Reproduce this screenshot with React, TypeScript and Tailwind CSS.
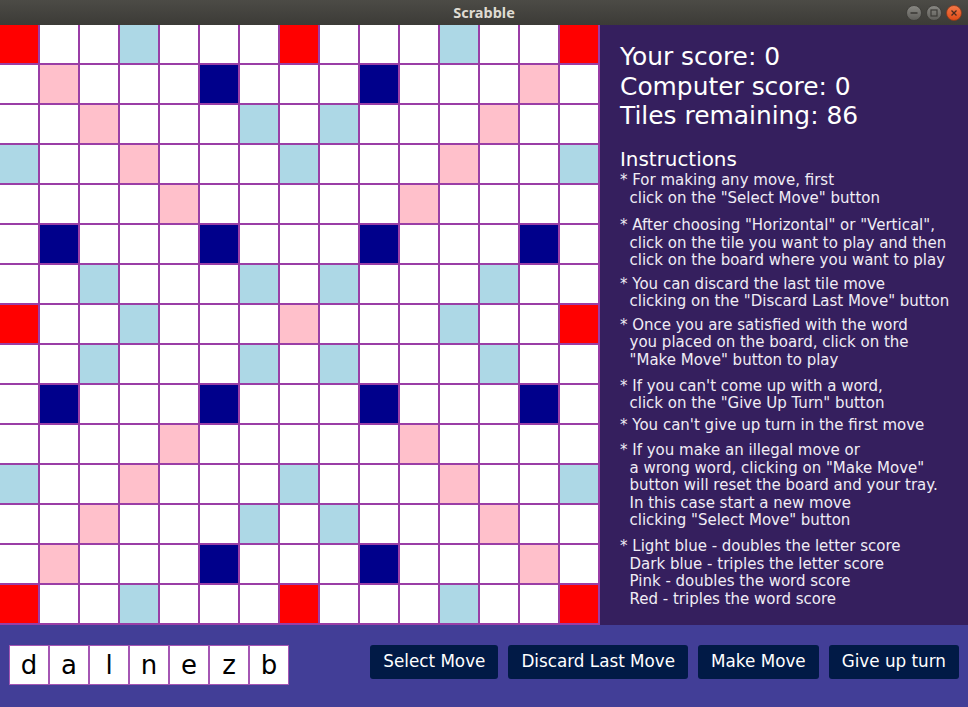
import React from "react";

type Kind = "N" | "TW" | "DW" | "TL" | "DL";

const TW: [number, number][] = [[0,0],[0,7],[0,14],[7,0],[7,14],[14,0],[14,7],[14,14]];
const DW: [number, number][] = [[1,1],[2,2],[3,3],[4,4],[1,13],[2,12],[3,11],[4,10],[13,1],[12,2],[11,3],[10,4],[13,13],[12,12],[11,11],[10,10],[7,7]];
const TL: [number, number][] = [[1,5],[1,9],[5,1],[5,5],[5,9],[5,13],[9,1],[9,5],[9,9],[9,13],[13,5],[13,9]];
const DL: [number, number][] = [[0,3],[0,11],[2,6],[2,8],[3,0],[3,7],[3,14],[6,2],[6,6],[6,8],[6,12],[7,3],[7,11],[8,2],[8,6],[8,8],[8,12],[11,0],[11,7],[11,14],[12,6],[12,8],[14,3],[14,11]];

function kindOf(r: number, c: number): Kind {
  const has = (l: [number, number][]) => l.some(([a, b]) => a === r && b === c);
  if (has(TW)) return "TW";
  if (has(DW)) return "DW";
  if (has(TL)) return "TL";
  if (has(DL)) return "DL";
  return "N";
}

const cellClass: Record<Kind, string> = {
  N: "bg-white",
  TW: "bg-[#ff0000]",
  DW: "bg-[#ffc0cb]",
  TL: "bg-[#00008b]",
  DL: "bg-[#add8e6]",
};

const paragraphs: { text: string; mt: string }[] = [
  { text: '* For making any move, first\n  click on the "Select Move" button', mt: "mt-[1.5px]" },
  { text: '* After choosing "Horizontal" or "Vertical",\n  click on the tile you want to play and then\n  click on the board where you want to play', mt: "mt-[10px]" },
  { text: '* You can discard the last tile move\n  clicking on the "Discard Last Move" button', mt: "mt-[6px]" },
  { text: '* Once you are satisfied with the word\n  you placed on the board, click on the\n  "Make Move" button to play', mt: "mt-[6px]" },
  { text: "* If you can't come up with a word,\n  click on the \"Give Up Turn\" button", mt: "mt-[8.5px]" },
  { text: "* You can't give up turn in the first move", mt: "mt-[4.5px]" },
  { text: '* If you make an illegal move or\n  a wrong word, clicking on "Make Move"\n  button will reset the board and your tray.\n  In this case start a new move\n  clicking "Select Move" button', mt: "mt-[7.5px]" },
  { text: "* Light blue - doubles the letter score\n  Dark blue - triples the letter score\n  Pink - doubles the word score\n  Red - triples the word score", mt: "mt-[8.5px]" },
];

const tray = ["d", "a", "l", "n", "e", "z", "b"];
const buttons = ["Select Move", "Discard Last Move", "Make Move", "Give up turn"];

function WinButtons() {
  return (
    <div className="absolute right-[6px] top-[5px] flex gap-[4px]">
      <svg width="16" height="16" viewBox="0 0 16 16">
        <defs>
          <linearGradient id="g1" x1="0" y1="0" x2="0" y2="1">
            <stop offset="0" stopColor="#8a8984" />
            <stop offset="1" stopColor="#5d5c58" />
          </linearGradient>
          <linearGradient id="g2" x1="0" y1="0" x2="0" y2="1">
            <stop offset="0" stopColor="#f37a4a" />
            <stop offset="1" stopColor="#df4a16" />
          </linearGradient>
        </defs>
        <circle cx="8" cy="8" r="7.5" fill="url(#g1)" stroke="#3a3935" strokeWidth="0.8" />
        <line x1="4.5" y1="8" x2="11.5" y2="8" stroke="#3c3b37" strokeWidth="1.6" />
      </svg>
      <svg width="16" height="16" viewBox="0 0 16 16">
        <circle cx="8" cy="8" r="7.5" fill="url(#g1)" stroke="#3a3935" strokeWidth="0.8" />
        <rect x="5" y="5" width="6" height="6" fill="none" stroke="#3c3b37" strokeWidth="1.2" />
      </svg>
      <svg width="16" height="16" viewBox="0 0 16 16">
        <circle cx="8" cy="8" r="7.5" fill="url(#g2)" stroke="#8a3a1c" strokeWidth="0.8" />
        <path d="M5.5 5.5 L10.5 10.5 M10.5 5.5 L5.5 10.5" stroke="#4a2a1e" strokeWidth="1.3" />
      </svg>
    </div>
  );
}

export default function App() {
  const cells = [];
  for (let r = 0; r < 15; r++) {
    for (let c = 0; c < 15; c++) {
      const k = kindOf(r, c);
      cells.push(
        <div
          key={`${r}-${c}`}
          className={`h-[40px] w-[40px] border-r-2 border-b-2 border-[#9a3ea6] ${cellClass[k]}`}
        />
      );
    }
  }

  return (
    <div className="flex h-[707px] w-[968px] flex-col overflow-hidden font-['DejaVu_Sans',sans-serif]">
      <div className="relative flex h-[25px] items-center justify-center bg-gradient-to-b from-[#4c4b46] to-[#3c3b37]">
        <span className="font-['Noto_Sans',sans-serif] text-[14.5px] font-bold text-[#dfdbd2] leading-none">
          Scrabble
        </span>
        <WinButtons />
      </div>

      <div className="flex h-[600px]">
        <div className="grid w-[600px] grid-cols-[repeat(15,40px)]">{cells}</div>
        <div className="flex-1 bg-[#351f5e] pl-[20px] pt-[17px] text-white">
          <div className="text-[24.9px] leading-[29.5px]">
            <div>Your score: 0</div>
            <div>Computer score: 0</div>
            <div>Tiles remaining: 86</div>
          </div>
          <div className="mt-[17px] text-[19.9px] leading-[23px]">Instructions</div>
          <div className="text-[15px] leading-[17.5px] text-[#f0ecf5]">
            {paragraphs.map((p, i) => (
              <div key={i} className={`whitespace-pre ${p.mt}`}>
                {p.text}
              </div>
            ))}
          </div>
        </div>
      </div>

      <div className="flex h-[82px] items-start bg-[#423e97]">
        <div className="ml-[9px] mt-[20px] flex">
          {tray.map((t, i) => (
            <div
              key={i}
              className="flex h-[40px] w-[40px] items-center justify-center border border-[#a456b4] bg-white text-[26px] text-black"
            >
              {t}
            </div>
          ))}
        </div>
        <div className="ml-auto mr-[9px] mt-[20px] flex gap-[10px]">
          {buttons.map((b) => (
            <div
              key={b}
              className="flex h-[34px] items-center rounded-[3px] bg-[#011a46] px-[13px] text-[16.8px] text-white"
            >
              {b}
            </div>
          ))}
        </div>
      </div>
    </div>
  );
}
